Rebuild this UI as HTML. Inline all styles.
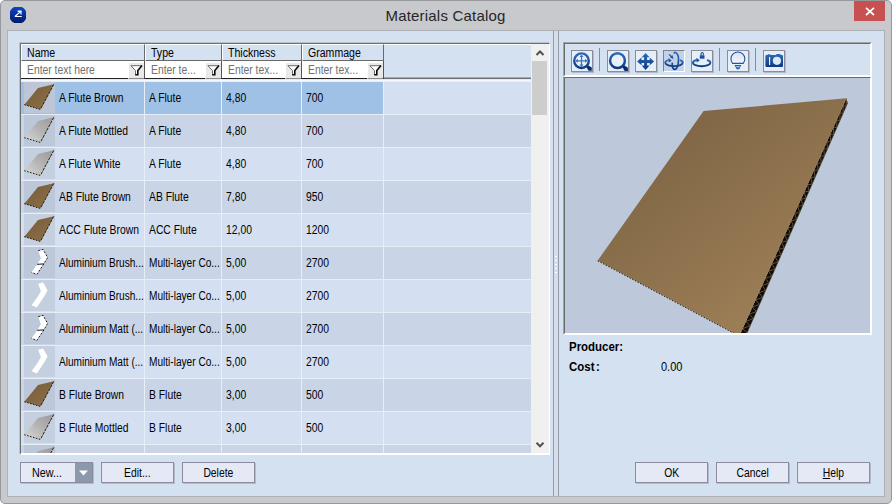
<!DOCTYPE html>
<html><head><meta charset="utf-8"><title>Materials Catalog</title>
<style>
*{box-sizing:border-box}
html,body{margin:0;padding:0}
body{width:892px;height:504px;overflow:hidden;background:#fff;font-family:"Liberation Sans",sans-serif;font-size:11px;color:#000;position:relative}
.abs{position:absolute}
#frame{position:absolute;left:0;top:0;width:892px;height:504px;border:1px solid #97989c;border-radius:5px;background:#c8c9cd}
#title{position:absolute;left:0;top:7px;width:891px;text-align:center;font-size:15px;color:#262626;letter-spacing:0.2px}
#close{position:absolute;left:854px;top:1px;width:31px;height:20px;background:#c75050}
#client{position:absolute;left:8px;top:31px;width:876px;height:465px;background:#d3e1f1;box-shadow:0 0 0 1px #adb0b6}
#list{position:absolute;left:20px;top:43px;width:530px;height:412px;background:#d3e1f1;border:1px solid #6e6e6e;border-right-color:#fff;border-bottom:2px solid #fff;box-shadow:-1px -1px 0 #b9c1cc}
#listin{position:absolute;left:0;top:0;right:0;bottom:0;border:1px solid #fff;border-right:none;border-bottom:none;}
.row{position:absolute;left:21px;width:510px;height:32px;}
.row .c,.row .tc{position:absolute;top:0;height:32px;line-height:32px;white-space:nowrap;overflow:hidden}
.row.odd .c,.row.odd .tc{background:#d4e0f1}
.row.even .c,.row.even .tc{background:#c9d5e7}
.row.odd .th{background:#c4cfdf}
.row.even .th{background:#bcc8d9}
.row.sel .c1,.row.sel .c2,.row.sel .c3,.row.sel .c4{background:#9fc1e6}
.row.sel .tc{background:#9fc1e6}
.row.sel .th{background:#bcc6d6}
.t{display:inline-block;transform-origin:0 50%;transform:scaleX(.862);white-space:nowrap;font-size:12px}
.t.n{transform:scaleX(.8415)}
.hd .t{transform:scaleX(.88)}
.tc{left:0;width:34px}
.th{position:absolute;left:3px;top:0}
.c1{left:34px;width:89px;padding-left:4px}
.c2{left:124px;width:76px;padding-left:4px}
.c3{left:201px;width:79px;padding-left:4px}
.c4{left:281px;width:81px;padding-left:4px}
.c5{left:363px;width:147px}
.hsep{position:absolute;left:22px;width:509px;height:1px;background:#e6edf7}
.vsep{position:absolute;top:81px;width:1px;height:372px;background:#e6edf7}
.hd{position:absolute;top:44px;height:17px;border-right:1px solid #6a6a6a;border-bottom:1px solid #6a6a6a;border-left:1px solid #fff;border-top:1px solid #fff;padding-left:5px;line-height:16px;background:#d3e1f1;color:#000}
.flt{position:absolute;top:61px;height:18px;background:#fff;border-right:1px solid #555;border-bottom:1px solid #222;color:#707070;line-height:19px;padding-left:6px;white-space:nowrap}
.fb{position:absolute;right:0;top:1px;width:16px;height:17px;background:#e9e9e9;border:1px solid #fff;border-right:none;border-bottom-color:#8a8a8a}
.btn{position:absolute;top:462px;width:73px;height:21px;background:#e4e9f5;border:1px solid #8c8c9e;box-shadow:1px 1px 0 #b3bccd;text-align:center;line-height:21px;font-size:11px;color:#000}
.tb{position:absolute;top:50px;width:22px;height:22px;background:#e6eef8;border:1px solid #8b8b99;box-shadow:1px 1px 0 #b3bccd}
.tb svg{position:absolute;left:0;top:0}
.tsep{position:absolute;top:48px;width:1px;height:23px;background:#7e8ea6}
</style></head><body>
<svg width="0" height="0" style="position:absolute"><defs>
<linearGradient id="gb" x1="0" y1="0" x2="1" y2="1"><stop offset="0" stop-color="#745a38"/><stop offset="1" stop-color="#8f7249"/></linearGradient>
<linearGradient id="gg" x1="1" y1="0" x2="0" y2="1"><stop offset="0" stop-color="#999"/><stop offset="0.5" stop-color="#b4b4b4"/><stop offset="1" stop-color="#d8d8d8"/></linearGradient>
<linearGradient id="gbl" x1="0" y1="0" x2="0" y2="1"><stop offset="0" stop-color="#2f6bb8"/><stop offset="1" stop-color="#0c3a84"/></linearGradient>
<linearGradient id="gbig" gradientUnits="userSpaceOnUse" x1="640" y1="120" x2="780" y2="300"><stop offset="0" stop-color="#7c6343"/><stop offset="1" stop-color="#9c7e56"/></linearGradient>
</defs></svg>
<div id="frame"></div>
<div id="title">Materials Catalog</div>
<svg class="abs" style="left:9px;top:6px" width="18" height="18" viewBox="0 0 18 18"><defs><linearGradient id="gi" x1="0" y1="0" x2="0" y2="1"><stop offset="0" stop-color="#0c48c4"/><stop offset="1" stop-color="#00186a"/></linearGradient><clipPath id="ci"><rect x="1" y="1" width="16" height="16"/></clipPath></defs><circle cx="9" cy="9" r="8.8" fill="url(#gi)" clip-path="url(#ci)"/><path d="M5.8,10.5 H12.8 M6.2,10.3 L11.8,5.4" stroke="#fff" stroke-width="1.2" fill="none"/><polygon points="8.6,4.6 12.6,4.6 12.6,8.4 11.4,8.4 11.4,5.9 8.6,5.9" fill="#fff"/></svg>
<div id="close"><svg width="31" height="20" viewBox="0 0 31 20"><path d="M12,6.8 L20,14 M20,6.8 L12,14" stroke="#fff" stroke-width="1.7"/></svg></div>
<div id="client"></div>

<div id="list"><div id="listin"></div></div>
<div class="hd" style="left:21px;width:124px"><span class="t">Name</span></div>
<div class="hd" style="left:145px;width:77px"><span class="t">Type</span></div>
<div class="hd" style="left:222px;width:80px"><span class="t">Thickness</span></div>
<div class="hd" style="left:302px;width:82px"><span class="t">Grammage</span></div>
<div class="flt" style="left:21px;width:124px;padding-left:6px"><span class="t">Enter text here</span><div class="fb"><svg width="16" height="17" viewBox="0 0 16 17" style="position:absolute;left:-1px;top:-1px"><path d="M2.9,3.6 H14.1 L10,8.4 V12.8 H7.4 V8.4 Z" fill="#fff" stroke="none"/><path d="M2.8,3.7 H13.8 M3,3.8 L7.5,8.6 V12.6" fill="none" stroke="#6a6a6a" stroke-width="1"/><path d="M14,3.6 L9.8,8.6 V12.8 H7.2" fill="none" stroke="#0a0a0a" stroke-width="1.6"/></svg></div></div>
<div class="flt" style="left:145px;width:77px"><span class="t">Enter te...</span><div class="fb"><svg width="16" height="17" viewBox="0 0 16 17" style="position:absolute;left:-1px;top:-1px"><path d="M2.9,3.6 H14.1 L10,8.4 V12.8 H7.4 V8.4 Z" fill="#fff" stroke="none"/><path d="M2.8,3.7 H13.8 M3,3.8 L7.5,8.6 V12.6" fill="none" stroke="#6a6a6a" stroke-width="1"/><path d="M14,3.6 L9.8,8.6 V12.8 H7.2" fill="none" stroke="#0a0a0a" stroke-width="1.6"/></svg></div></div>
<div class="flt" style="left:222px;width:80px"><span class="t">Enter tex...</span><div class="fb"><svg width="16" height="17" viewBox="0 0 16 17" style="position:absolute;left:-1px;top:-1px"><path d="M2.9,3.6 H14.1 L10,8.4 V12.8 H7.4 V8.4 Z" fill="#fff" stroke="none"/><path d="M2.8,3.7 H13.8 M3,3.8 L7.5,8.6 V12.6" fill="none" stroke="#6a6a6a" stroke-width="1"/><path d="M14,3.6 L9.8,8.6 V12.8 H7.2" fill="none" stroke="#0a0a0a" stroke-width="1.6"/></svg></div></div>
<div class="flt" style="left:302px;width:82px"><span class="t">Enter tex...</span><div class="fb"><svg width="16" height="17" viewBox="0 0 16 17" style="position:absolute;left:-1px;top:-1px"><path d="M2.9,3.6 H14.1 L10,8.4 V12.8 H7.4 V8.4 Z" fill="#fff" stroke="none"/><path d="M2.8,3.7 H13.8 M3,3.8 L7.5,8.6 V12.6" fill="none" stroke="#6a6a6a" stroke-width="1"/><path d="M14,3.6 L9.8,8.6 V12.8 H7.2" fill="none" stroke="#0a0a0a" stroke-width="1.6"/></svg></div></div>
<div class="abs" style="left:384px;top:77px;width:147px;height:2px;background:#6e6e6e;border-top:1px solid #a3abb6"></div>
<div class="abs" style="left:21px;top:79px;width:510px;height:3px;background:#f5f8fc;border-top:1px solid #e3eaf4;border-bottom:1px solid #d9e5f4"></div>
<div id="rows" class="abs" style="left:0;top:0;width:531px;height:453px;overflow:hidden"><div class="abs" style="left:21px;top:81px;width:510px;height:372px;background:#e7eef8"></div>
<div class="row odd sel" style="top:82px"><div class="tc"><svg class="th" width="31" height="31" viewBox="0 0 31 31"><path d="M14,6 L29.8,2.2 L17.2,26.2 Q16.4,27.6 15,27.1 L0.3,22.7 Z" fill="url(#gb)"/><path d="M29.8,2.4 L16.6,27" fill="none" stroke="#2c2212" stroke-width="1" stroke-dasharray="3 1"/><path d="M16.2,27.4 L0.3,22.7" fill="none" stroke="#1c160c" stroke-width="1" stroke-dasharray="1.6 1.4"/></svg></div><div class="c c1"><span class="t">A Flute Brown</span></div><div class="c c2"><span class="t">A Flute</span></div><div class="c c3"><span class="t">4,80</span></div><div class="c c4"><span class="t">700</span></div><div class="c c5"></div></div>
<div class="row even" style="top:115px"><div class="tc"><svg class="th" width="31" height="31" viewBox="0 0 31 31"><path d="M14,6 L29.8,2.2 L17.2,26.2 Q16.4,27.6 15,27.1 L0.3,22.7 Z" fill="url(#gg)"/><path d="M29.8,2.4 L16.6,27" fill="none" stroke="#2c2212" stroke-width="1" stroke-dasharray="3 1"/><path d="M16.2,27.4 L0.3,22.7" fill="none" stroke="#1c160c" stroke-width="1" stroke-dasharray="1.6 1.4"/></svg></div><div class="c c1"><span class="t">A Flute Mottled</span></div><div class="c c2"><span class="t">A Flute</span></div><div class="c c3"><span class="t">4,80</span></div><div class="c c4"><span class="t">700</span></div><div class="c c5"></div></div>
<div class="row odd" style="top:148px"><div class="tc"><svg class="th" width="31" height="31" viewBox="0 0 31 31"><path d="M14,6 L29.8,2.2 L17.2,26.2 Q16.4,27.6 15,27.1 L0.3,22.7 Z" fill="url(#gg)"/><path d="M29.8,2.4 L16.6,27" fill="none" stroke="#2c2212" stroke-width="1" stroke-dasharray="3 1"/><path d="M16.2,27.4 L0.3,22.7" fill="none" stroke="#1c160c" stroke-width="1" stroke-dasharray="1.6 1.4"/></svg></div><div class="c c1"><span class="t">A Flute White</span></div><div class="c c2"><span class="t">A Flute</span></div><div class="c c3"><span class="t">4,80</span></div><div class="c c4"><span class="t">700</span></div><div class="c c5"></div></div>
<div class="row even" style="top:181px"><div class="tc"><svg class="th" width="31" height="31" viewBox="0 0 31 31"><path d="M14,6 L29.8,2.2 L17.2,26.2 Q16.4,27.6 15,27.1 L0.3,22.7 Z" fill="url(#gb)"/><path d="M29.8,2.4 L16.6,27" fill="none" stroke="#2c2212" stroke-width="1" stroke-dasharray="3 1"/><path d="M16.2,27.4 L0.3,22.7" fill="none" stroke="#1c160c" stroke-width="1" stroke-dasharray="1.6 1.4"/></svg></div><div class="c c1"><span class="t">AB Flute Brown</span></div><div class="c c2"><span class="t">AB Flute</span></div><div class="c c3"><span class="t">7,80</span></div><div class="c c4"><span class="t">950</span></div><div class="c c5"></div></div>
<div class="row odd" style="top:214px"><div class="tc"><svg class="th" width="31" height="31" viewBox="0 0 31 31"><path d="M14,6 L29.8,2.2 L17.2,26.2 Q16.4,27.6 15,27.1 L0.3,22.7 Z" fill="url(#gb)"/><path d="M29.8,2.4 L16.6,27" fill="none" stroke="#2c2212" stroke-width="1" stroke-dasharray="3 1"/><path d="M16.2,27.4 L0.3,22.7" fill="none" stroke="#1c160c" stroke-width="1" stroke-dasharray="1.6 1.4"/></svg></div><div class="c c1"><span class="t">ACC Flute Brown</span></div><div class="c c2"><span class="t">ACC Flute</span></div><div class="c c3"><span class="t">12,00</span></div><div class="c c4"><span class="t">1200</span></div><div class="c c5"></div></div>
<div class="row even" style="top:247px"><div class="tc"><svg class="th" width="31" height="31" viewBox="0 0 31 31"><polygon points="14.2,3.7 19.1,2.4 23.6,10.5 20,16.7 12.8,27.5 7.5,25.3 13.3,17.2 16.9,11.3" fill="#fff"/><path d="M14.2,3.7 L19.1,2.4 L23.6,10.5 L20,16.7 L12.8,27.5 L7.5,25.3" fill="none" stroke="#111" stroke-width="0.9" stroke-dasharray="2.2 1.4"/><path d="M13.2,17.3 L20,16.9" fill="none" stroke="#111" stroke-width="1"/></svg></div><div class="c c1"><span class="t n">Aluminium Brush...</span></div><div class="c c2"><span class="t n">Multi-layer Co...</span></div><div class="c c3"><span class="t">5,00</span></div><div class="c c4"><span class="t">2700</span></div><div class="c c5"></div></div>
<div class="row odd" style="top:280px"><div class="tc"><svg class="th" width="31" height="31" viewBox="0 0 31 31"><polygon points="14.2,3.7 19.1,2.4 23.6,10.5 20,16.7 12.8,27.5 7.5,25.3 13.3,17.2 16.9,11.3" fill="#fff"/></svg></div><div class="c c1"><span class="t n">Aluminium Brush...</span></div><div class="c c2"><span class="t n">Multi-layer Co...</span></div><div class="c c3"><span class="t">5,00</span></div><div class="c c4"><span class="t">2700</span></div><div class="c c5"></div></div>
<div class="row even" style="top:313px"><div class="tc"><svg class="th" width="31" height="31" viewBox="0 0 31 31"><polygon points="14.2,3.7 19.1,2.4 23.6,10.5 20,16.7 12.8,27.5 7.5,25.3 13.3,17.2 16.9,11.3" fill="#fff"/><path d="M14.2,3.7 L19.1,2.4 L23.6,10.5 L20,16.7 L12.8,27.5 L7.5,25.3" fill="none" stroke="#111" stroke-width="0.9" stroke-dasharray="2.2 1.4"/><path d="M13.2,17.3 L20,16.9" fill="none" stroke="#111" stroke-width="1"/></svg></div><div class="c c1"><span class="t n">Aluminium Matt (...</span></div><div class="c c2"><span class="t n">Multi-layer Co...</span></div><div class="c c3"><span class="t">5,00</span></div><div class="c c4"><span class="t">2700</span></div><div class="c c5"></div></div>
<div class="row odd" style="top:346px"><div class="tc"><svg class="th" width="31" height="31" viewBox="0 0 31 31"><polygon points="14.2,3.7 19.1,2.4 23.6,10.5 20,16.7 12.8,27.5 7.5,25.3 13.3,17.2 16.9,11.3" fill="#fff"/></svg></div><div class="c c1"><span class="t n">Aluminium Matt (...</span></div><div class="c c2"><span class="t n">Multi-layer Co...</span></div><div class="c c3"><span class="t">5,00</span></div><div class="c c4"><span class="t">2700</span></div><div class="c c5"></div></div>
<div class="row even" style="top:379px"><div class="tc"><svg class="th" width="31" height="31" viewBox="0 0 31 31"><path d="M14,6 L29.8,2.2 L17.2,26.2 Q16.4,27.6 15,27.1 L0.3,22.7 Z" fill="url(#gb)"/><path d="M29.8,2.4 L16.6,27" fill="none" stroke="#2c2212" stroke-width="1" stroke-dasharray="3 1"/><path d="M16.2,27.4 L0.3,22.7" fill="none" stroke="#1c160c" stroke-width="1" stroke-dasharray="1.6 1.4"/></svg></div><div class="c c1"><span class="t">B Flute Brown</span></div><div class="c c2"><span class="t">B Flute</span></div><div class="c c3"><span class="t">3,00</span></div><div class="c c4"><span class="t">500</span></div><div class="c c5"></div></div>
<div class="row odd" style="top:412px"><div class="tc"><svg class="th" width="31" height="31" viewBox="0 0 31 31"><path d="M14,6 L29.8,2.2 L17.2,26.2 Q16.4,27.6 15,27.1 L0.3,22.7 Z" fill="url(#gg)"/><path d="M29.8,2.4 L16.6,27" fill="none" stroke="#2c2212" stroke-width="1" stroke-dasharray="3 1"/><path d="M16.2,27.4 L0.3,22.7" fill="none" stroke="#1c160c" stroke-width="1" stroke-dasharray="1.6 1.4"/></svg></div><div class="c c1"><span class="t">B Flute Mottled</span></div><div class="c c2"><span class="t">B Flute</span></div><div class="c c3"><span class="t">3,00</span></div><div class="c c4"><span class="t">500</span></div><div class="c c5"></div></div>
<div class="row even" style="top:445px"><div class="tc"><svg class="th" width="31" height="31" viewBox="0 0 31 31"><path d="M14,6 L29.8,2.2 L17.2,26.2 Q16.4,27.6 15,27.1 L0.3,22.7 Z" fill="url(#gg)"/><path d="M29.8,2.4 L16.6,27" fill="none" stroke="#2c2212" stroke-width="1" stroke-dasharray="3 1"/><path d="M16.2,27.4 L0.3,22.7" fill="none" stroke="#1c160c" stroke-width="1" stroke-dasharray="1.6 1.4"/></svg></div><div class="c c1"><span class="t"></span></div><div class="c c2"><span class="t"></span></div><div class="c c3"><span class="t"></span></div><div class="c c4"><span class="t"></span></div><div class="c c5"></div></div>
</div>
<!-- scrollbar -->
<div class="abs" style="left:531px;top:44px;width:18px;height:409px;background:#f0f0f0"></div>
<div class="abs" style="left:532px;top:61px;width:15px;height:54px;background:#cdcdcd"></div>
<svg class="abs" style="left:531.5px;top:44px" width="17" height="17"><path d="M4.5,11 L8,7.5 L11.5,11" fill="none" stroke="#505050" stroke-width="2"/></svg>
<svg class="abs" style="left:531.5px;top:436px" width="17" height="17"><path d="M4.5,6.8 L8,10.3 L11.5,6.8" fill="none" stroke="#505050" stroke-width="2"/></svg>

<div class="btn" style="left:20px;text-align:left;padding-left:11px"><span class="t" style="transform:scaleX(.897)">New...</span><div class="abs" style="left:54px;top:0;width:17px;height:19px;background:#8c98ab"><svg width="17" height="19"><polygon points="4,7.5 13,7.5 8.5,12.5" fill="#fff"/></svg></div></div>
<div class="btn" style="left:101px"><span class="t" style="transform-origin:50% 50%">Edit...</span></div>
<div class="btn" style="left:182px"><span class="t" style="transform-origin:50% 50%">Delete</span></div>
<div class="btn" style="left:635px"><span class="t" style="transform-origin:50% 50%">OK</span></div>
<div class="btn" style="left:716px"><span class="t" style="transform-origin:50% 50%">Cancel</span></div>
<div class="btn" style="left:797px"><span class="t" style="transform-origin:50% 50%"><u>H</u>elp</span></div>

<!-- splitter -->
<div class="abs" style="left:553px;top:31px;width:6px;height:465px;background:#d6dce9;border-left:1px solid #939cab;border-right:1px solid #939cab"></div>

<div class="abs" style="left:555px;top:256px;width:2px;height:1px;background:#fff"></div><div class="abs" style="left:555px;top:260px;width:2px;height:1px;background:#fff"></div><div class="abs" style="left:555px;top:264px;width:2px;height:1px;background:#fff"></div><div class="abs" style="left:555px;top:268px;width:2px;height:1px;background:#fff"></div><div class="abs" style="left:555px;top:272px;width:2px;height:1px;background:#fff"></div>
<!-- toolbar -->
<div class="abs" style="left:563px;top:42px;width:309px;height:35px;border:1px solid #a4a4a4;border-right-color:#fff;border-bottom-color:#fff;background:#d3e1f1"><div class="abs" style="left:0;top:0;right:0;bottom:0;border:1px solid #6a6a6a;border-right-color:#fff;border-bottom-color:#fff"></div></div>
<div class="tb" style="left:571px"><svg width="22" height="22" viewBox="0 0 22 22" style="left:-1px;top:-1px"><circle cx="10.5" cy="10.7" r="7.3" fill="#e9f0f9" stroke="url(#gbl)" stroke-width="2.4"/><polygon points="15.2,17 17,15.2 20.8,17.6 20.8,20.8 17.6,20.8" fill="#0b2f6e"/><path d="M10.5,5.6 V16 M5.3,10.8 H15.7" stroke="#3a72ba" stroke-width="1.2"/><path d="M10.5,4.7 L12.5,7.1 H8.5 Z M10.5,16.9 L12.5,14.5 H8.5 Z M4.4,10.8 L6.8,8.8 V12.8 Z M16.6,10.8 L14.2,8.8 V12.8 Z" fill="#3a72ba"/></svg></div>
<div class="tsep" style="left:599px"></div>
<div class="tb" style="left:607px"><svg width="22" height="22" viewBox="0 0 22 22" style="left:-1px;top:-1px"><circle cx="10.5" cy="10.7" r="7.4" fill="#e9f0f9" stroke="url(#gbl)" stroke-width="2.5"/><polygon points="15.3,17.1 17.1,15.3 20.9,17.7 20.9,20.9 17.7,20.9" fill="#0b2f6e"/></svg></div>
<div class="tb" style="left:635px"><svg width="22" height="22" viewBox="0 0 22 22" style="left:-1px;top:-1px"><path d="M10.6,2.9 L14.5,7.3 H12.1 V9.9 H14.7 V7.5 L19.1,11.4 L14.7,15.3 V12.9 H12.1 V15.5 H14.5 L10.6,19.9 L6.7,15.5 H9.1 V12.9 H6.5 V15.3 L2.1,11.4 L6.5,7.5 V9.9 H9.1 V7.3 H6.7 Z" fill="url(#gbl)"/></svg></div>
<div class="tb" style="left:663px;background:#c5d2e6;border-color:#7e7e8c #fff #fff #7e7e8c;box-shadow:none"><svg width="22" height="22" viewBox="0 0 22 22" style="left:-1px;top:-1px"><path d="M17,10.2 C18.8,10.8 19.8,11.7 19.8,12.6 C19.8,14.6 15.9,16.1 11,16.1 C6.1,16.1 2.2,14.6 2.2,12.6 C2.2,11.6 3.4,10.6 5.6,10" fill="none" stroke="url(#gbl)" stroke-width="1.8"/><polygon points="8.7,10.5 5.3,8 5.8,12.4" fill="#1d56a3"/><path d="M10.9,3.6 C11.4,2.5 12.1,2 12.7,2.4 C14.7,3.6 16,8 15.3,13 C14.7,17 13.1,19.7 11.6,19.4 C10.3,19.1 9.4,17.4 9.2,15.4 L9.3,12.6" fill="none" stroke="url(#gbl)" stroke-width="1.7"/><polygon points="10.5,9.2 6.9,7.3 9.5,5.1" fill="#1d56a3"/><path d="M6,4.4 L8.6,6.8" stroke="#1d56a3" stroke-width="1.2"/></svg></div>
<div class="tb" style="left:691px"><svg width="22" height="22" viewBox="0 0 22 22" style="left:-1px;top:-1px"><path d="M16,10 C18.2,10.6 19.4,11.6 19.4,12.7 C19.4,14.7 15.4,16.2 10.6,16.2 C5.8,16.2 1.9,14.7 1.9,12.7 C1.9,11.5 3.4,10.5 6,10" fill="none" stroke="url(#gbl)" stroke-width="1.9"/><polygon points="8.8,10.2 5.4,7.8 5.8,12.5" fill="#1d56a3"/><rect x="8.8" y="5.3" width="4.7" height="3.4" fill="#1a4f9c"/><path d="M10.1,5.4 V3.8 C10.1,2.1 12.3,2.1 12.3,3.8 V5.4" fill="none" stroke="#1a4f9c" stroke-width="1.1"/></svg></div>
<div class="tsep" style="left:719px"></div>
<div class="tb" style="left:727px"><svg width="22" height="22" viewBox="0 0 22 22" style="left:-1px;top:-1px"><defs><linearGradient id="gbu" x1="0" y1="0" x2="0" y2="1"><stop offset="0" stop-color="#dfe2f3"/><stop offset="1" stop-color="#f2f4fb"/></linearGradient></defs><path d="M5.6,13.4 A6.95,6.95 0 1 1 16.2,13.4 Z" fill="url(#gbu)" stroke="#1d56a3" stroke-width="1.1"/><path d="M7.5,14.9 H14.3 L12.5,18.8 Q10.9,20 9.4,18.8 Z" fill="#2460ae"/><path d="M9,15.9 H12.9 L12.2,17.5 H9.8 Z" fill="#8ccaf0"/></svg></div>
<div class="tsep" style="left:755px"></div>
<div class="tb" style="left:763px"><svg width="22" height="22" viewBox="0 0 22 22" style="left:-1px;top:-1px"><path d="M2.4,6 Q2.4,5 3.4,5 H4.6 V4.2 H7.4 V5 H13 L13.6,4 H17.2 L17.8,5 H19 Q20,5 20,6 V16 Q20,17 19,17 H3.4 Q2.4,17 2.4,16 Z" fill="url(#gbl)"/><circle cx="13.9" cy="10.8" r="4.1" fill="#dfe7f2"/><path d="M6.6,7 V15" stroke="#e8eef7" stroke-width="1.2"/></svg></div>

<!-- 3D view -->
<div class="abs" style="left:563px;top:77px;width:309px;height:258px;border:1px solid #a4a4a4;border-top:none;border-right-color:#fff;border-bottom-color:#fff;background:#bdc9da"><div class="abs" style="left:0;top:0;right:0;bottom:0;border:1px solid #6a6a6a;border-right-color:#fff;border-bottom-color:#fff"></div></div>
<svg class="abs" style="left:0;top:0" width="892" height="504" viewBox="0 0 892 504"><defs><clipPath id="cv"><rect x="565" y="78" width="305" height="255"/></clipPath></defs>
<g clip-path="url(#cv)">
<polygon points="846.5,98.3 847.6,103 745.6,336.2 739.4,335.9" fill="#0f0b06"/>
<path d="M846.5,98.3 L846.1,106.5 L843.3,105.5 L843.0,113.6 L840.0,112.7 L839.9,120.7 L836.8,119.9 L836.8,127.7 L833.5,127.1 L833.7,134.8 L830.3,134.3 L830.6,141.9 L827.0,141.5 L827.5,148.9 L823.8,148.7 L824.4,156.0 L820.5,155.9 L821.3,163.1 L817.3,163.1 L818.2,170.1 L814.0,170.3 L815.1,177.2 L810.8,177.5 L812.1,184.3 L807.6,184.7 L809.0,191.3 L804.3,191.9 L805.9,198.4 L801.1,199.1 L802.8,205.5 L797.8,206.3 L799.7,212.5 L794.6,213.5 L796.6,219.6 L791.3,220.7 L793.5,226.7 L788.1,227.9 L790.4,233.7 L784.8,235.1 L787.3,240.8 L781.6,242.3 L784.2,247.9 L778.3,249.5 L781.1,254.9 L775.1,256.7 L778.1,262.0 L771.9,263.9 L775.0,269.1 L768.6,271.1 L771.9,276.1 L765.4,278.3 L768.8,283.2 L762.1,285.5 L765.7,290.3 L758.9,292.7 L762.6,297.3 L755.6,299.9 L759.5,304.4 L752.4,307.1 L756.4,311.5 L749.1,314.3 L753.3,318.5 L745.9,321.5 L750.2,325.6 L742.6,328.7 L747.1,332.7 L739.4,335.9" fill="none" stroke="#9a7d55" stroke-width="0.6"/>
<path d="M847.6,103 L745.6,336.2" stroke="#4a3a24" stroke-width="0.6" fill="none"/>
<polygon points="703.6,111 846.5,98.3 739.4,335.9 597.7,260.5" fill="url(#gbig)"/>
<path d="M597.7,260.8 L739.4,336.2" stroke="#2a1e10" stroke-width="1" stroke-dasharray="1.5 1.5" fill="none"/>
</g></svg>

<div class="abs" style="left:569px;top:340px;font-weight:bold"><span class="t" style="transform:scaleX(.955)">Producer:</span></div>
<div class="abs" style="left:569px;top:360px;font-weight:bold"><span class="t" style="transform:scaleX(.955)">Cost<span style="margin-left:1.5px">:</span></span></div>
<div class="abs" style="left:661px;top:360px"><span class="t" style="transform:scaleX(.917)">0.00</span></div>
</body></html>
